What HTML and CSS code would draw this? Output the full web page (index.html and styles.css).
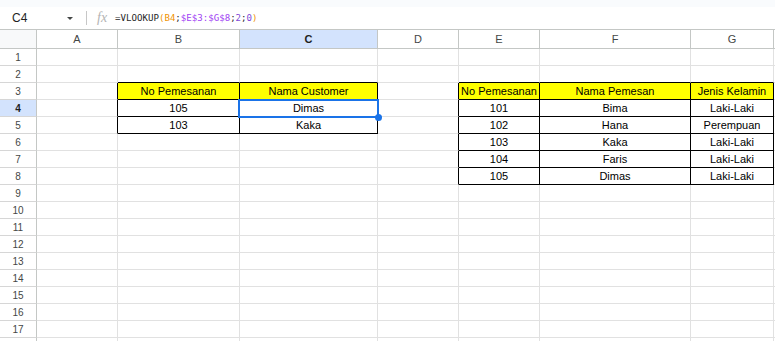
FILE: index.html
```html
<!DOCTYPE html>
<html lang="en">
<head>
    <meta charset="UTF-8">
    <meta name="viewport" content="width=device-width, initial-scale=1.0">
    <title>VLOOKUP - Sheet</title>
    <link rel="stylesheet" href="styles.css">
</head>
<body>
    <div class="top-strip"></div>

    <div class="formula-bar">
        <div class="name-box">
            <span class="cell-ref">C4</span>
            <span class="caret"></span>
        </div>
        <span class="divider"></span>
        <span class="fx">fx</span>
        <div class="formula">=VLOOKUP<span class="paren">(</span><span class="ref">B4</span>;<span class="range">$E$3:$G$8</span>;<span class="num">2</span>;<span class="num">0</span><span class="paren">)</span></div>
    </div>

    <div class="sheet">
        <div class="grid" id="grid"></div>
    </div>

    <script>
        var columns = ['A', 'B', 'C', 'D', 'E', 'F', 'G', 'H'];
        var rowCount = 18;
        var lastLabel = 17; // row 18 sits under the window edge

        // Cell values of the two tables
        var values = {
            B3: 'No Pemesanan', C3: 'Nama Customer',
            B4: '105', C4: 'Dimas',
            B5: '103', C5: 'Kaka',
            E3: 'No Pemesanan', F3: 'Nama Pemesan', G3: 'Jenis Kelamin',
            E4: '101', F4: 'Bima', G4: 'Laki-Laki',
            E5: '102', F5: 'Hana', G5: 'Perempuan',
            E6: '103', F6: 'Kaka', G6: 'Laki-Laki',
            E7: '104', F7: 'Faris', G7: 'Laki-Laki',
            E8: '105', F8: 'Dimas', G8: 'Laki-Laki'
        };

        // Bordered ranges: [first col, last col, first row, last row]
        var boxes = [[1, 2, 3, 5], [4, 6, 3, 8]];

        function inBox(c, r) {
            return boxes.some(function (b) {
                return c >= b[0] && c <= b[1] && r >= b[2] && r <= b[3];
            });
        }

        var grid = document.getElementById('grid');

        function addCell(className, text) {
            var div = document.createElement('div');
            div.className = className;
            if (text) div.textContent = text;
            grid.appendChild(div);
            return div;
        }

        // Header row
        addCell('corner');
        columns.forEach(function (col) {
            addCell('col-head' + (col === 'C' ? ' active' : ''), col === 'H' ? '' : col);
        });

        // Body rows
        for (var r = 1; r <= rowCount; r++) {
            addCell('row-head' + (r === 4 ? ' active' : ''), r <= lastLabel ? String(r) : '');
            columns.forEach(function (col, c) {
                var name = 'cell';
                if (inBox(c, r)) name += ' boxed';
                if (inBox(c + 1, r)) name += ' edge-right';
                if (inBox(c, r + 1)) name += ' edge-bottom';
                if (r === 3 && inBox(c, r)) name += ' title';
                if (col + r === 'C4') name += ' selected';
                addCell(name, values[col + r]);
            });
        }
    </script>
</body>
</html>
```

FILE: styles.css
```css
body {
    margin: 0;
    font-family: "Liberation Sans", Arial, sans-serif;
    background-color: #fff;
    overflow: hidden;
}
.top-strip {
    height: 7px;
    background-color: #f9fbfd;
}
.formula-bar {
    display: flex;
    align-items: center;
    height: 22px;
    background-color: #fff;
}
.name-box {
    display: flex;
    align-items: center;
    width: 86px;
    padding-left: 12px;
    box-sizing: border-box;
}
.cell-ref {
    font-size: 12px;
    color: #1f1f1f;
    width: 55px;
}
.caret {
    width: 0;
    height: 0;
    border-left: 3.5px solid transparent;
    border-right: 3.5px solid transparent;
    border-top: 3.5px solid #444746;
    margin-top: 1px;
}
.divider {
    width: 1px;
    height: 14px;
    background-color: #c7c7c7;
}
.fx {
    font-family: "Liberation Serif", serif;
    font-style: italic;
    font-size: 14px;
    color: #b4b4b4;
    margin-left: 10px;
    margin-right: 8px;
}
.formula {
    font-family: "DejaVu Sans Mono", monospace;
    font-size: 9.1px;
    color: #1f1f1f;
}
.formula .ref,
.formula .paren {
    color: #f09300;
}
.formula .range {
    color: #a142f4;
}
.formula .num {
    color: #8048d8;
}
.sheet {
    overflow: hidden;
}
.grid {
    display: grid;
    grid-template-columns: 37px 81px 122px 138px 81px 81px 151px 83px 81px;
    grid-template-rows: 19px;
    grid-auto-rows: 17px;
    border-top: 1px solid #c4c7c5;
}
.grid > div {
    box-sizing: border-box;
    display: flex;
    align-items: center;
    justify-content: center;
    border-right: 1px solid #e1e1e1;
    border-bottom: 1px solid #e1e1e1;
    font-size: 11px;
    white-space: nowrap;
}
.corner {
    background-color: #f8f9fa;
    border-right: 1px solid #c4c7c5 !important;
    border-bottom: 1px solid #c4c7c5 !important;
}
.col-head {
    color: #444746;
    border-right: 1px solid #c4c7c5 !important;
    border-bottom: 1px solid #c4c7c5 !important;
}
.row-head {
    color: #444746;
    font-size: 10px !important;
    border-right: 1px solid #c4c7c5 !important;
    border-bottom: 1px solid #d6d6d6 !important;
}
.active {
    background-color: #d3e3fd;
    color: #1f1f1f;
    font-weight: bold;
}
.cell {
    color: #000;
}
.boxed,
.edge-right {
    border-right: 1px solid #000 !important;
}
.boxed,
.edge-bottom {
    border-bottom: 1px solid #000 !important;
}
.title {
    background-color: #ffff00;
}
.selected {
    position: relative;
}
.selected::after {
    content: "";
    position: absolute;
    left: -2px;
    top: -1px;
    right: -2px;
    bottom: -2px;
    border: 2px solid #1a73e8;
}
.selected::before {
    content: "";
    position: absolute;
    right: -5px;
    bottom: -5px;
    width: 7px;
    height: 7px;
    border-radius: 50%;
    background-color: #1a73e8;
    z-index: 1;
}
```
